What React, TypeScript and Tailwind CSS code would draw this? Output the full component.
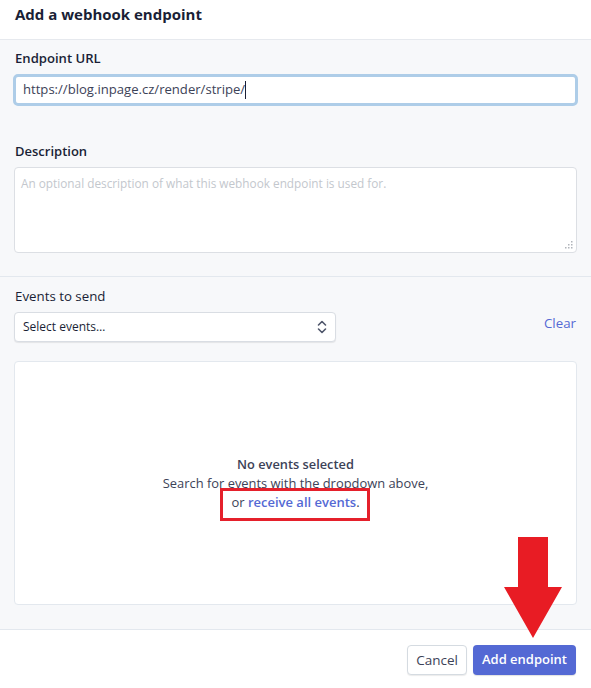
import React from "react";

const font = { fontFamily: '"Open Sans", "Noto Sans", sans-serif' };

const UpDown: React.FC = () => (
    <svg width="10" height="14" viewBox="0 0 10 14" fill="none" stroke="#4f566b" strokeWidth="1.6" strokeLinecap="round" strokeLinejoin="round">
        <path d="M1.5 5 L5 1.5 L8.5 5"/>
        <path d="M1.5 9 L5 12.5 L8.5 9"/>
    </svg>
);

const Grip: React.FC = () => (
    <svg width="8" height="8" viewBox="0 0 8 8" fill="#b0b4ba">
        <rect x="6" y="0" width="1.5" height="1.5"/>
        <rect x="3" y="3" width="1.5" height="1.5"/>
        <rect x="6" y="3" width="1.5" height="1.5"/>
        <rect x="0" y="6" width="1.5" height="1.5"/>
        <rect x="3" y="6" width="1.5" height="1.5"/>
        <rect x="6" y="6" width="1.5" height="1.5"/>
    </svg>
);

export default function App() {
    return (
        <div className="relative w-[591px] h-[688px] bg-white text-[#1a1f36] overflow-hidden" style={font}>
            {/* header */}
            <div className="h-[40px] px-[15px] pt-[4px] border-b border-[#e6e9ee] bg-white">
                <h1 className="text-[15px] leading-[20px] font-bold text-[#1a1f36]">Add a webhook endpoint</h1>
            </div>

            {/* body */}
            <div className="bg-[#f7f8fa] h-[590px] flex flex-col">
                <div className="px-[14px] pt-[8px] h-[237px] border-b border-[#e3e8ee]">
                    <div className="pl-[1px] text-[13.1px] leading-[20px] font-semibold text-[#1a1f36]">Endpoint URL</div>
                    <div className="mt-[6px] -mx-[1px] h-[32px] rounded-[5px] border-[3px] border-[#aecde8] bg-white flex items-center pl-[7px] text-[13.1px] text-[#3c4257]">
                        <span>https://blog.inpage.cz/render/stripe/</span>
                        <span className="w-px h-[18px] bg-[#1a1f36]"></span>
                    </div>
                    <div className="mt-[35px] pl-[1px] text-[13px] leading-[20px] font-semibold text-[#1a1f36]">Description</div>
                    <div className="relative mt-[6px] h-[86px] rounded-[4px] border border-[#dcdfe4] bg-white px-[6px] pt-[5px] text-[11.8px] leading-[20px] text-[#c3c7cd]">
                        An optional description of what this webhook endpoint is used for.
                        <div className="absolute right-[3px] bottom-[3px]"><Grip/></div>
                    </div>
                </div>

                <div className="px-[14px] pt-[9px] flex-1 border-b border-[#e3e8ee]">
                    <div className="pl-[1px] text-[13.3px] leading-[20px] text-[#1a1f36]">Events to send</div>
                    <div className="mt-[6px] flex items-center justify-between">
                        <div className="w-[322px] h-[30px] rounded-[4px] bg-white border border-[#d9dde3] shadow-[0_1px_1px_rgba(0,0,0,0.08)] flex items-center justify-between pl-[8px] pr-[8px] text-[12px] text-[#1a1f36]">
                            <span>Select events…</span>
                            <UpDown/>
                        </div>
                        <span className="text-[13.3px] text-[#5469d4] mr-[1px] -mt-[6px]">Clear</span>
                    </div>
                    <div className="mt-[19px] h-[244px] rounded-[4px] border border-[#e3e8ee] bg-white flex flex-col items-center justify-center text-[12.9px] leading-[19px] text-[#3c4257]">
                        <div className="text-[12.8px] font-semibold text-[#3c4257]">No events selected</div>
                        <div>Search for events with the dropdown above,</div>
                        <div className="relative text-[13px]">
                            or <span className="text-[#5469d4] font-semibold">receive all events</span>.
                            <span className="absolute -left-[11px] -right-[10px] -top-[5px] -bottom-[9px] border-[3px] border-[#e5202b]"></span>
                        </div>
                    </div>
                </div>
            </div>

            {/* footer */}
            <div className="h-[58px] flex items-start justify-end gap-[6px] pt-[15px] pr-[15px] bg-white">
                <button className="h-[30px] px-[8px] rounded-[4px] bg-white border border-[#d5dbe1] shadow-[0_1px_1px_rgba(0,0,0,0.08)] text-[13.5px] text-[#3c4257]">Cancel</button>
                <button className="h-[30px] px-[9px] rounded-[4px] bg-[#5469d4] text-[13px] font-semibold text-white shadow-[0_1px_1px_rgba(0,0,0,0.12)]">Add endpoint</button>
            </div>

            {/* annotation arrow */}
            <svg className="absolute left-[504px] top-[537px]" width="59" height="102" viewBox="0 0 59 102">
                <polygon points="14,0 44,0 44,50 58,50 29,101 0,50 14,50" fill="#e81c24"/>
            </svg>
        </div>
    );
}
